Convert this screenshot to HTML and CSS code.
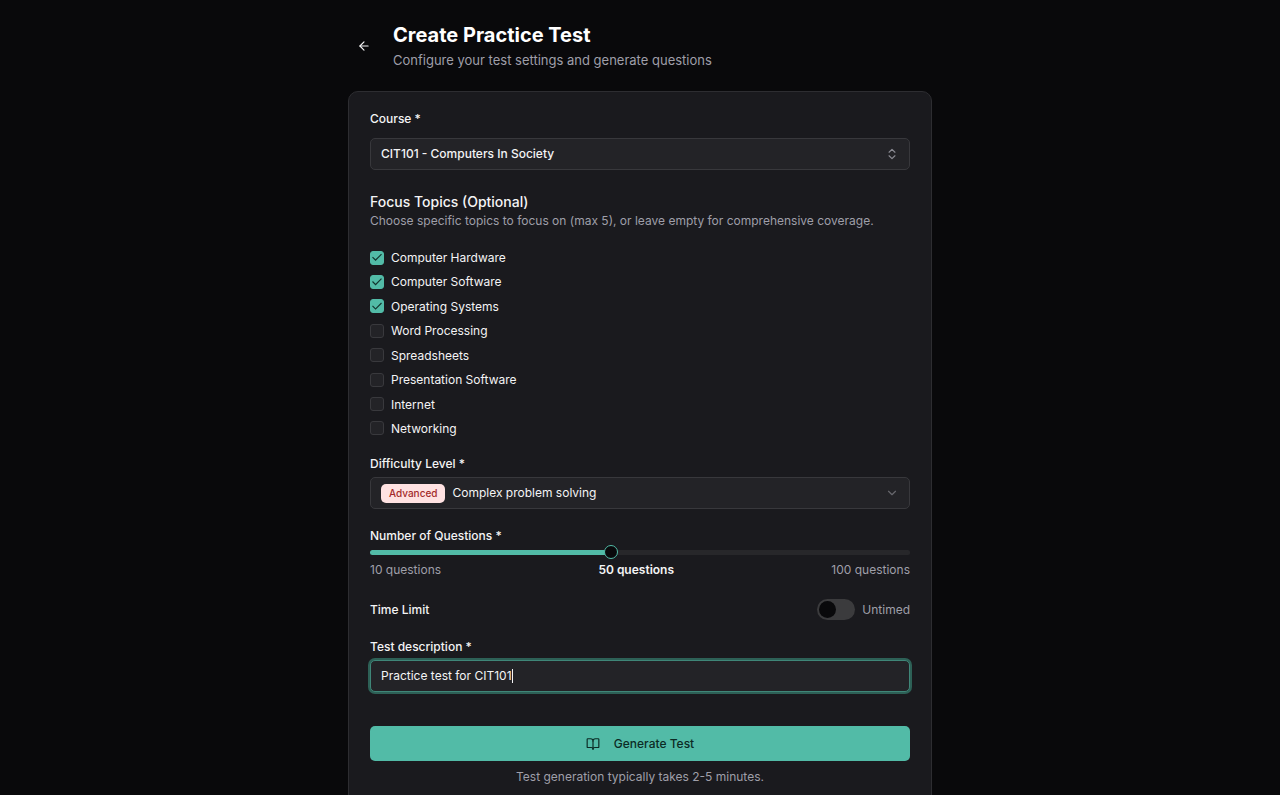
FILE: index.html
```html
<!DOCTYPE html>
<html lang="en">
<head>
<meta charset="UTF-8">
<meta name="viewport" content="width=device-width, initial-scale=1.0">
<title>Create Practice Test</title>

<link rel="stylesheet" href="styles.css">
</head>

<body>

<main class="page">

<header class="page-header">
<button class="back" type="button" aria-label="Go back">
<svg class="icon" viewBox="0 0 24 24"><path d="m12 19-7-7 7-7"/><path d="M19 12H5"/></svg>
</button>
<div>
<h1>Create Practice Test</h1>
<p>Configure your test settings and generate questions</p>
</div>
</header>

<form class="card">

<div class="group course">
<label class="label" for="course">Course *</label>
<div class="field">
<select id="course" class="strong">
<option>CIT101 - Computers In Society</option>
</select>
<svg class="icon muted" viewBox="0 0 24 24"><path d="m7 15 5 5 5-5"/><path d="m7 9 5-5 5 5"/></svg>
</div>
</div>

<div class="group topics">
<h2>Focus Topics (Optional)</h2>
<p class="hint">Choose specific topics to focus on (max 5), or leave empty for comprehensive coverage.</p>
<div class="topic-list">
<label class="topic"><input type="checkbox" checked>Computer Hardware</label>
<label class="topic"><input type="checkbox" checked>Computer Software</label>
<label class="topic"><input type="checkbox" checked>Operating Systems</label>
<label class="topic"><input type="checkbox">Word Processing</label>
<label class="topic"><input type="checkbox">Spreadsheets</label>
<label class="topic"><input type="checkbox">Presentation Software</label>
<label class="topic"><input type="checkbox">Internet</label>
<label class="topic"><input type="checkbox">Networking</label>
</div>
</div>

<div class="group">
<label class="label" for="difficulty">Difficulty Level *</label>
<div class="field">
<span class="badge">Advanced</span>
<select id="difficulty">
<option>Complex problem solving</option>
</select>
<svg class="icon faint" viewBox="0 0 24 24"><path d="m6 9 6 6 6-6"/></svg>
</div>
</div>

<div class="group count">
<label class="label" for="questions">Number of Questions *</label>
<input class="slider" id="questions" type="range" min="10" max="100" value="50" style="--fill:44.4%">
<div class="scale">
<span>10 questions</span>
<strong id="count">50 questions</strong>
<span>100 questions</span>
</div>
</div>

<div class="group time">
<label class="label" for="timed">Time Limit</label>
<div class="time-value">
<input class="switch" id="timed" type="checkbox" role="switch">
<span>Untimed</span>
</div>
</div>

<div class="group">
<label class="label" for="description">Test description *</label>
<div class="field active">
<input class="text" id="description" type="text" value="Practice test for CIT101">
<span class="caret"></span>
</div>
</div>

<button class="submit" type="submit">
<svg class="icon" viewBox="0 0 24 24"><path d="M12 7v14"/><path d="M3 18a1 1 0 0 1-1-1V4a1 1 0 0 1 1-1h5a4 4 0 0 1 4 4 4 4 0 0 1 4-4h5a1 1 0 0 1 1 1v13a1 1 0 0 1-1 1h-6a3 3 0 0 0-3 3 3 3 0 0 0-3-3z"/></svg>
Generate Test
</button>
<p class="note">Test generation typically takes 2-5 minutes.</p>

</form>

</main>

<script>
const slider = document.getElementById("questions");

slider.addEventListener("input", () => {
    const pct = (slider.value - slider.min) / (slider.max - slider.min) * 100;
    slider.style.setProperty("--fill", pct + "%");
    document.getElementById("count").innerText = slider.value + " questions";
});
</script>

</body>
</html>
```
FILE: styles.css
```css
*{
    box-sizing:border-box;
}

:root{
    --bg:#09090b;
    --card:#1a1a1e;
    --field:#232327;
    --border:#38383c;
    --text:#f4f4f5;
    --muted:#9f9fa9;
    --primary:#52bba7;
}

html{
    scrollbar-width:none;
}

body{
    margin:0;
    background:var(--bg);
    color:var(--text);
    font-family:Inter, sans-serif;
    font-size:12px;
    line-height:18px;
}

h1, h2, p{
    margin:0;
}

button, input, select{
    font:inherit;
    color:inherit;
}

.page{
    max-width:584px;
    margin:0 auto;
    padding:21px 0;
}

.page-header{
    display:flex;
    align-items:center;
    gap:14px;
    margin-bottom:21px;
}

.page-header h1{
    font-size:20px;
    line-height:29px;
    font-weight:700;
    color:#fff;
}

.page-header p{
    font-size:13px;
    line-height:20px;
    color:var(--muted);
}

.icon{
    width:14px;
    height:14px;
    flex:none;
    fill:none;
    stroke:currentColor;
    stroke-width:2;
    stroke-linecap:round;
    stroke-linejoin:round;
}

.muted{
    color:#8b8b93;
}

.faint{
    color:#67676d;
}

.back{
    display:flex;
    align-items:center;
    justify-content:center;
    width:31px;
    height:31px;
    padding:0;
    border:none;
    background:none;
    cursor:pointer;
}

.card{
    padding:20px 21px;
    background:var(--card);
    border:1px solid #2d2d31;
    border-radius:10px;
}

.group{
    display:flex;
    flex-direction:column;
    gap:6px;
    margin-bottom:20px;
}

.course{
    gap:12px;
    margin-bottom:22px;
}

.label{
    line-height:14px;
    font-weight:500;
}

/* select and text boxes */
.field{
    display:flex;
    align-items:center;
    gap:7px;
    height:32px;
    padding:0 10px;
    background:var(--field);
    border:1px solid var(--border);
    border-radius:5px;
}

.field select{
    flex:1;
    min-width:0;
    padding:0;
    border:none;
    outline:none;
    background:none;
    appearance:none;
}

.field .strong{
    font-weight:500;
}

.badge{
    padding:0 8px;
    background:#ffe2e2;
    color:#a32a2a;
    border-radius:5px;
    font-size:10px;
    line-height:19px;
    font-weight:500;
}

.active{
    gap:0;
    border-color:#3f8678;
    box-shadow:0 0 0 2px #2d6056;
}

.text{
    field-sizing:content;
    padding:0;
    border:none;
    outline:none;
    background:none;
}

.caret{
    width:1px;
    height:14px;
    background:var(--text);
}

.topics{
    gap:0;
}

.topics h2{
    font-size:14px;
    line-height:19px;
    font-weight:500;
}

.hint{
    line-height:19px;
    color:var(--muted);
}

.topic-list{
    display:flex;
    flex-direction:column;
    justify-content:space-between;
    min-height:188px;
    margin-top:19px;
}

.topic{
    display:flex;
    align-items:center;
    gap:7px;
    line-height:17px;
}

.topic input{
    display:grid;
    place-content:center;
    width:14px;
    height:14px;
    margin:0;
    appearance:none;
    background:var(--field);
    border:1px solid #39393d;
    border-radius:3px;
}

.topic input:checked{
    background:var(--primary);
    border-color:var(--primary);
}

.topic input:checked::before{
    content:"";
    width:12px;
    height:12px;
    background:#12352e;
    clip-path:polygon(9% 50%, 16% 43%, 38% 65%, 84% 19%, 91% 26%, 38% 79%);
}

.count{
    gap:2px;
}

.slider{
    width:100%;
    height:14px;
    margin:0;
    appearance:none;
    background:none;
}

.slider::-webkit-slider-runnable-track{
    height:5px;
    border-radius:3px;
    background:linear-gradient(to right, var(--primary) var(--fill), #27272a var(--fill));
}

.slider::-webkit-slider-thumb{
    appearance:none;
    width:14px;
    height:14px;
    margin-top:-5px;
    background:var(--bg);
    border:1px solid var(--primary);
    border-radius:50%;
}

.scale{
    display:flex;
    justify-content:space-between;
    color:var(--muted);
}

.scale strong{
    font-weight:600;
    color:var(--text);
}

.time{
    flex-direction:row;
    align-items:center;
    justify-content:space-between;
}

.time-value{
    display:flex;
    align-items:center;
    gap:7px;
    color:var(--muted);
}

.switch{
    width:38px;
    height:21px;
    margin:0;
    padding:2px;
    appearance:none;
    background:#3b3b3d;
    border-radius:11px;
}

.switch::before{
    content:"";
    display:block;
    width:17px;
    height:17px;
    background:var(--bg);
    border-radius:50%;
}

.switch:checked{
    background:var(--primary);
}

.switch:checked::before{
    margin-left:auto;
}

.submit{
    display:flex;
    align-items:center;
    justify-content:center;
    gap:14px;
    width:100%;
    height:35px;
    margin:34px 0 7px;
    background:var(--primary);
    color:#0c2b25;
    border:none;
    border-radius:5px;
    font-weight:500;
    cursor:pointer;
}

.note{
    text-align:center;
    color:var(--muted);
}
```
